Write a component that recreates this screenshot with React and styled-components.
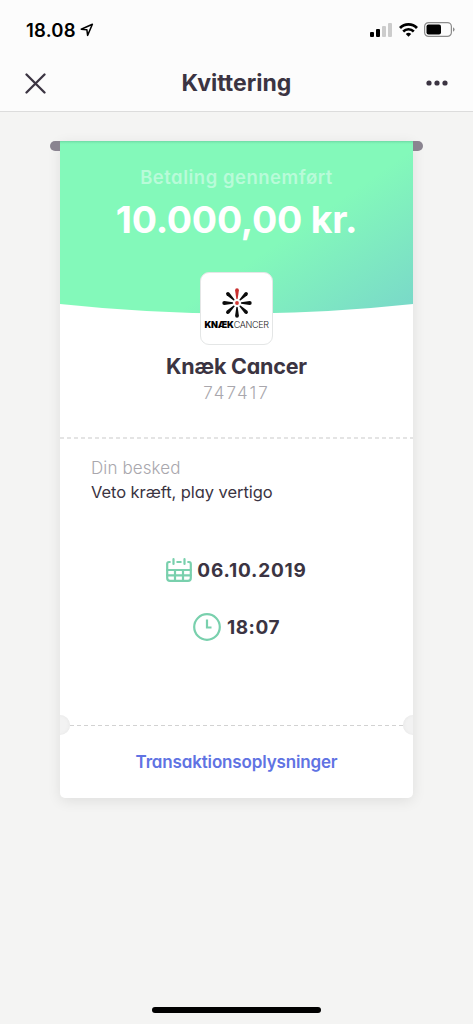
import styled, { createGlobalStyle } from "styled-components";

const GlobalStyle = createGlobalStyle`
  body {
    margin: 0;
    background: #f4f4f3;
    font-family: Inter, "Liberation Sans", sans-serif;
    font-feature-settings: "cv11";
    color: #3b3442;
  }
`;

const Screen = styled.div`
  width: 473px;
  height: 1024px;
  display: flex;
  flex-direction: column;
  overflow: hidden;
`;

const Top = styled.header`
  height: 111px;
  background: #fcfcfc;
  border-bottom: 1px solid #dcdcdc;
`;

const StatusBar = styled.div`
  display: flex;
  align-items: center;
  justify-content: space-between;
  height: 59px;
  padding: 0 18px 0 26px;
  box-sizing: border-box;
  color: #000;
`;

const StatusGroup = styled.div`
  display: flex;
  align-items: center;
  gap: ${(p) => p.$gap}px;
`;

const NavBar = styled.div`
  display: grid;
  grid-template-columns: 60px 1fr 60px;
  align-items: center;
  height: 48px;
`;

const IconButton = styled.button`
  display: flex;
  justify-content: ${(p) => (p.$end ? "flex-end" : "flex-start")};
  padding: ${(p) => (p.$end ? "0 25px 0 0" : "0 0 0 25px")};
  border: 0;
  background: none;
  color: #3b3442;
`;

//one line of text, every label on the page is made of this
const Text = styled.div`
  font-size: ${(p) => p.$size}px;
  line-height: ${(p) => p.$line || 24}px;
  font-weight: ${(p) => p.$weight || 400};
  letter-spacing: ${(p) => p.$spacing || 0}px;
  color: ${(p) => p.$color || "inherit"};
  text-align: ${(p) => p.$align || "left"};
  white-space: nowrap;
`;

const Main = styled.main`
  flex: 1;
  padding-top: 29px;
`;

const Receipt = styled.section`
  position: relative;
  width: 353px;
  height: 657px;
  margin: 0 auto;
  display: flex;
  flex-direction: column;
  background: #fff;
  border-radius: 0 0 5px 5px;
  box-shadow: 0 3px 14px rgba(0, 0, 0, 0.09);
`;

//the ends of the bar that the receipt hangs from
const RollEnd = styled.div`
  position: absolute;
  top: 0;
  ${(p) => p.$side}: -10px;
  width: 10px;
  height: 10px;
  background: #8a8490;
  border-radius: ${(p) => (p.$side === "left" ? "5px 0 0 5px" : "0 5px 5px 0")};
`;

const HeroShape = styled.svg`
  position: absolute;
  top: 0;
  left: 0;
`;

const Hero = styled.div`
  position: relative;
  height: 131px;
  padding-top: 24px;
  box-sizing: border-box;
`;

const LogoBox = styled.div`
  position: relative;
  display: flex;
  flex-direction: column;
  align-items: center;
  width: 73px;
  height: 73px;
  margin: 0 auto;
  padding-top: 15px;
  box-sizing: border-box;
  background: #fff;
  border: 1px solid #e4e6e6;
  border-radius: 9px;
`;

const LogoName = styled.div`
  display: flex;
  margin-top: 1px;
  font-size: 9px;
  line-height: 12px;
  color: #222;
`;

const LogoBold = styled.span`
  font-weight: 900;
  color: #000;
  letter-spacing: -0.2px;
`;

const LogoThin = styled.span`
  font-weight: 300;
  letter-spacing: -0.35px;
`;

const Recipient = styled.div`
  height: 92px;
  padding-top: 9px;
  box-sizing: border-box;
`;

const Dashes = styled.div`
  height: 2px;
  background: repeating-linear-gradient(
    90deg,
    ${(p) => p.$color} 0 4px,
    transparent 4px ${(p) => p.$step}px
  );
`;

const Message = styled.div`
  height: 106px;
  padding: 17px 31px 0;
  box-sizing: border-box;
`;

const Details = styled.div`
  flex: 1;
  display: flex;
  flex-direction: column;
  align-items: center;
  gap: 28px;
  padding-top: 11px;
`;

const DetailRow = styled.div`
  display: flex;
  align-items: center;
  gap: ${(p) => p.$gap}px;
  height: 29px;

  svg {
    margin-bottom: 2px;
  }
`;

const TearLine = styled.div`
  display: flex;
  align-items: center;
  justify-content: space-between;
  height: 20px;
  margin: 0 -10px;
`;

const TearDashes = styled(Dashes)`
  flex: 1;
  height: 1px;
`;

//only the half that bites into the paper is drawn
const Notch = styled.div`
  width: 20px;
  height: 20px;
  border-radius: 50%;
  background: #f2f2f2;
  box-shadow: inset ${(p) => (p.$right ? "1px" : "-1px")} 0 3px #e9e9e9;
  clip-path: inset(${(p) => (p.$right ? "0 10px 0 0" : "0 0 0 10px")});
`;

const LinkArea = styled.div`
  height: 63px;
  padding-top: 15px;
  box-sizing: border-box;
`;

const HomeBar = styled.div`
  width: 169px;
  height: 6px;
  margin: 0 auto 11px;
  border-radius: 3px;
  background: #000;
`;

const LocationIcon = () => (
  <svg width="14" height="14" viewBox="0 0 14 14">
    <path
      d="M1.2 6.2 12.4 1.3 7.6 12.4 6.9 6.8Z"
      fill="none"
      stroke="#000"
      strokeWidth="1.5"
      strokeLinejoin="round"
    />
  </svg>
);

const SignalIcon = () => (
  <svg width="22" height="14" viewBox="0 0 22 14">
    <rect x="0" y="9" width="4" height="5" rx="1" />
    <rect x="6" y="6" width="4" height="8" rx="1" />
    <rect x="12" y="3" width="4" height="11" rx="1" fill="#ccc" />
    <rect x="18" y="0" width="4" height="14" rx="1" fill="#ccc" />
  </svg>
);

const WifiIcon = () => (
  <svg width="19" height="14" viewBox="0 0 19 14" fill="none" stroke="#000">
    <path d="M1 5A12 12 0 0 1 18 5" strokeWidth="2.8" />
    <path d="M4.2 8.5A7.5 7.5 0 0 1 14.8 8.5" strokeWidth="2.6" />
    <path d="M9.5 13.8 6.8 11.1A3.9 3.9 0 0 1 12.2 11.1Z" fill="#000" stroke="none" />
  </svg>
);

const BatteryIcon = () => (
  <svg width="31" height="15" viewBox="0 0 31 15">
    <rect x=".6" y=".6" width="26.8" height="13.8" rx="4" fill="none" stroke="#8c8c8c" strokeWidth="1.2" />
    <rect x="2.5" y="2.5" width="14.5" height="10" rx="2" />
    <path d="M29 5.2Q30.6 6 30.6 7.5T29 9.8Z" fill="#8c8c8c" />
  </svg>
);

const CloseIcon = () => (
  <svg width="21" height="21" viewBox="0 0 21 21">
    <path d="M1.5 1.5 19.5 19.5M19.5 1.5 1.5 19.5" stroke="currentColor" strokeWidth="2.3" strokeLinecap="round" />
  </svg>
);

const MoreIcon = () => (
  <svg width="22" height="6" viewBox="0 0 22 6" fill="currentColor">
    <circle cx="3" cy="3" r="2.6" />
    <circle cx="11" cy="3" r="2.6" />
    <circle cx="19" cy="3" r="2.6" />
  </svg>
);

const rays = [0, 45, 90, 135, 180, 225, 270, 315];

const BurstIcon = () => (
  <svg width="30" height="30" viewBox="-15 -15 30 30">
    {rays.map((angle) => (
      <path
        key={angle}
        d="M-.7-4.2-1.9-12.7Q-1.9-14.7 0-14.7T1.9-12.7L.7-4.2Q0-3.4-.7-4.2Z"
        transform={`rotate(${angle})`}
        fill={angle === 0 ? "#c9302f" : "#0b0b0b"}
      />
    ))}
    <circle r="1.9" fill="#d23a35" />
  </svg>
);

const CalendarIcon = () => (
  <svg width="26" height="24" viewBox="0 0 26 24" fill="none" stroke="#79d0ad" strokeWidth="2.2" strokeLinecap="round">
    <path d="M3.8 4H3Q1.2 4 1.2 6V20Q1.2 22.8 4 22.8H22Q24.8 22.8 24.8 20V6Q24.8 4 23 4H22.2M11.3 4H14.7" />
    <path d="M7.5 1.2V6M18.5 1.2V6" />
    <path d="M1.2 12H24.8M1.2 17.3H24.8M9 12V22.5M17 12V22.5" />
  </svg>
);

const ClockIcon = () => (
  <svg width="28" height="28" viewBox="0 0 28 28" fill="none" stroke="#79d0ad" strokeWidth="2.2">
    <circle cx="14" cy="14" r="12.8" />
    <path d="M14 6.5V14.5H18.5" />
  </svg>
);

const App = () => {
  return (
    <Screen>
      <GlobalStyle />
      <Top>
        <StatusBar>
          <StatusGroup $gap={4}>
            <Text $size={18.5} $weight={600} $spacing={0.2}>
              18.08
            </Text>
            <LocationIcon />
          </StatusGroup>
          <StatusGroup $gap={6.5}>
            <SignalIcon />
            <WifiIcon />
            <BatteryIcon />
          </StatusGroup>
        </StatusBar>
        <NavBar>
          <IconButton aria-label="Luk">
            <CloseIcon />
          </IconButton>
          <Text $size={23} $weight={700} $align="center">
            Kvittering
          </Text>
          <IconButton $end aria-label="Mere">
            <MoreIcon />
          </IconButton>
        </NavBar>
      </Top>

      <Main>
        <Receipt>
          <RollEnd $side="left" />
          <RollEnd $side="right" />
          <HeroShape width="353" height="174" viewBox="0 0 353 174">
            <defs>
              <linearGradient id="mint" gradientUnits="userSpaceOnUse" x1="231" y1="62" x2="325" y2="198">
                <stop offset="0.15" stopColor="#83f9ba" />
                <stop offset="1" stopColor="#79d6ca" />
              </linearGradient>
              <linearGradient id="edge" x1="0" y1="0" x2="0" y2="1">
                <stop offset="0" stopColor="#5fc596" stopOpacity="0.6" />
                <stop offset="1" stopColor="#83f9ba" stopOpacity="0" />
              </linearGradient>
            </defs>
            <path d="M0 0H353V163Q176.5 182 0 163Z" fill="url(#mint)" />
            <rect width="353" height="4" fill="url(#edge)" />
          </HeroShape>
          <Hero>
            <Text $size={18.5} $weight={600} $spacing={0.5} $align="center" $color="#b9fbd9">
              Betaling gennemført
            </Text>
            <Text $size={37.5} $line={61} $weight={700} $spacing={-0.25} $align="center" $color="#fff">
              10.000,00 kr.
            </Text>
          </Hero>
          <LogoBox>
            <BurstIcon />
            <LogoName>
              <LogoBold>KNÆK</LogoBold>
              <LogoThin>CANCER</LogoThin>
            </LogoName>
          </LogoBox>
          <Recipient>
            <Text $size={21.5} $weight={700} $spacing={-0.2} $align="center">
              Knæk Cancer
            </Text>
            <Text $size={17} $line={30} $weight={300} $spacing={2} $align="center" $color="#a9a7ad">
              747417
            </Text>
          </Recipient>
          <Dashes $color="#e4e4e4" $step={7} />
          <Message>
            <Text $size={17} $weight={300} $spacing={0.1} $color="#a9a7ad">
              Din besked
            </Text>
            <Text $size={16.5} $spacing={-0.07}>
              Veto kræft, play vertigo
            </Text>
          </Message>
          <Details>
            <DetailRow $gap={5}>
              <CalendarIcon />
              <Text $size={19} $weight={700} $spacing={0.8}>
                06.10.2019
              </Text>
            </DetailRow>
            <DetailRow $gap={6}>
              <ClockIcon />
              <Text $size={19} $weight={700} $spacing={0.5}>
                18:07
              </Text>
            </DetailRow>
          </Details>
          <TearLine>
            <Notch />
            <TearDashes $color="#d2d2d2" $step={7} />
            <Notch $right />
          </TearLine>
          <LinkArea>
            <Text $size={17} $weight={600} $spacing={-0.15} $align="center" $color="#6073e3">
              Transaktionsoplysninger
            </Text>
          </LinkArea>
        </Receipt>
      </Main>
      <HomeBar />
    </Screen>
  );
};

export default App;
